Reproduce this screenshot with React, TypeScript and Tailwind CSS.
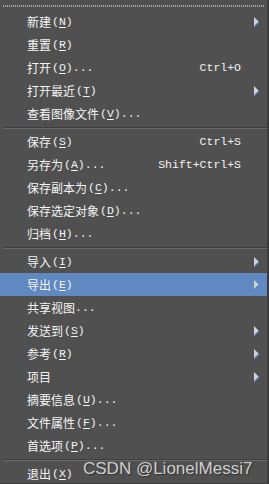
import React from "react";

type Item =
  | { type: "sep" }
  | {
      type: "item";
      label: string;
      key?: string;
      dots?: boolean;
      shortcut?: string;
      arrow?: boolean;
      active?: boolean;
    };

const items: Item[] = [
  { type: "item", label: "新建", key: "N", arrow: true },
  { type: "item", label: "重置", key: "R" },
  { type: "item", label: "打开", key: "O", dots: true, shortcut: "Ctrl+O" },
  { type: "item", label: "打开最近", key: "T", arrow: true },
  { type: "item", label: "查看图像文件", key: "V", dots: true },
  { type: "sep" },
  { type: "item", label: "保存", key: "S", shortcut: "Ctrl+S" },
  { type: "item", label: "另存为", key: "A", dots: true, shortcut: "Shift+Ctrl+S" },
  { type: "item", label: "保存副本为", key: "C", dots: true },
  { type: "item", label: "保存选定对象", key: "D", dots: true },
  { type: "item", label: "归档", key: "H", dots: true },
  { type: "sep" },
  { type: "item", label: "导入", key: "I", arrow: true },
  { type: "item", label: "导出", key: "E", arrow: true, active: true },
  { type: "item", label: "共享视图", dots: true },
  { type: "item", label: "发送到", key: "S", arrow: true },
  { type: "item", label: "参考", key: "R", arrow: true },
  { type: "item", label: "项目", arrow: true },
  { type: "item", label: "摘要信息", key: "U", dots: true },
  { type: "item", label: "文件属性", key: "F", dots: true },
  { type: "item", label: "首选项", key: "P", dots: true },
  { type: "sep" },
  { type: "item", label: "退出", key: "X" },
];

const cjk = { fontFamily: '"Noto Sans CJK SC", "Noto Sans", sans-serif' };
const mono = { fontFamily: '"Liberation Mono", "DejaVu Sans Mono", monospace' };

function Arrow() {
  return (
    <svg width="6" height="10" viewBox="0 0 6 10">
      <polygon points="0,0 5,5 0,10" fill="#d2d2d2" />
      <polyline points="0.5,9.5 5,5" stroke="#4d7fd0" strokeWidth="1.3" fill="none" />
    </svg>
  );
}

export default function App() {
  return (
    <div className="relative w-[269px] h-[484px] overflow-hidden bg-[#505050] border-r-2 border-b border-[#3b3b3b] text-[#f4f4f4]">
      <div className="pt-[5px]">
        <div className="mx-[3px] h-[2px] bg-[repeating-linear-gradient(90deg,#a8a8a8_0_1px,transparent_1px_2px)]" />
        <div className="h-[3px]" />
        {items.map((it, i) =>
          it.type === "sep" ? (
            <div key={i} className="h-[5px] flex flex-col justify-center pl-[3px]">
              <div className="h-px bg-[#3e3e3e]" />
              <div className="h-px bg-[#6a6a6a]" />
            </div>
          ) : (
            <div
              key={i}
              className={`h-[23px] flex items-center pl-[27px] ${it.active ? "bg-[#6089c2]" : ""}`}
            >
              <div className="flex-1 flex items-center whitespace-nowrap">
                <span className="text-[12px] leading-none" style={cjk}>
                  {it.label}
                </span>
                {it.key && (
                  <span className="text-[11.5px] leading-none ml-px" style={mono}>
                    (<span className="underline underline-offset-2">{it.key}</span>)
                  </span>
                )}
                {it.dots && (
                  <span className="text-[11.5px] leading-none" style={mono}>
                    ...
                  </span>
                )}
              </div>
              {it.shortcut && (
                <span className="text-[11.5px] leading-none whitespace-nowrap" style={mono}>
                  {it.shortcut}
                </span>
              )}
              <div className="w-[26px] h-full flex items-center pl-[13px]">
                {it.arrow && <Arrow />}
              </div>
            </div>
          )
        )}
      </div>
      <div
        className="absolute left-[83px] top-[456px] text-[17px] text-[#cfcfcf] whitespace-nowrap [text-shadow:1px_1px_1px_#333]"
        style={{ fontFamily: '"Liberation Sans", Arial, sans-serif' }}
      >
        CSDN @LionelMessi7
      </div>
    </div>
  );
}
